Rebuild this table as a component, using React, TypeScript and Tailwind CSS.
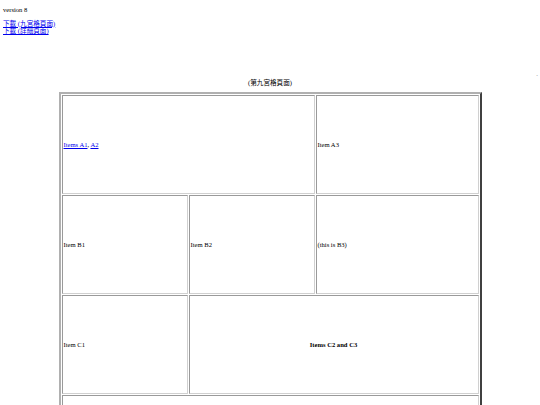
import React from "react";

const serif = { fontFamily: '"Liberation Serif", "Noto Sans CJK TC", serif' };

function Cell({ children, className = "" }: { children?: React.ReactNode; className?: string }) {
  return (
    <div
      className={
        "flex items-center h-[99px] px-[1px] border border-t-[#9a9a9a] border-l-[#9a9a9a] border-b-[#d0d0d0] border-r-[#d0d0d0] " +
        className
      }
    >
      {children}
    </div>
  );
}

export default function App() {
  return (
    <div className="bg-white w-[540px] h-[405px] overflow-hidden text-[6.6px] leading-[7.5px] text-black px-[3px] pt-[6px]" style={serif}>
      <div>version 8</div>
      <div className="mt-[6px]">
        <a href="#" className="text-[#0000ee] underline block">下載 (九宮格頁面)</a>
        <a href="#" className="text-[#0000ee] underline block">下載 (詳細頁面)</a>
      </div>
      <div className="text-right text-[#888] mt-[35px] -mr-[1px] h-[7px]">.</div>
      <div className="text-center mt-[2px]">(第九宮格頁面)</div>
      <div className="mx-auto mt-[6px] w-[423px] border-2 border-t-[#b0b0b0] border-l-[#b0b0b0] border-b-[#404040] border-r-[#404040] p-[1px]">
        <div className="grid grid-cols-[126px_126px_1fr] gap-[1px]">
          <Cell className="col-span-2">
            <span>
              <a href="#" className="text-[#0000ee] underline">Items A1</a>, <a href="#" className="text-[#0000ee] underline">A2</a>
            </span>
          </Cell>
          <Cell>Item A3</Cell>
          <Cell>Item B1</Cell>
          <Cell>Item B2</Cell>
          <Cell>(this is B3)</Cell>
          <Cell>Item C1</Cell>
          <Cell className="col-span-2 justify-center font-bold">Items C2 and C3</Cell>
          <Cell className="col-span-3"></Cell>
        </div>
      </div>
    </div>
  );
}
